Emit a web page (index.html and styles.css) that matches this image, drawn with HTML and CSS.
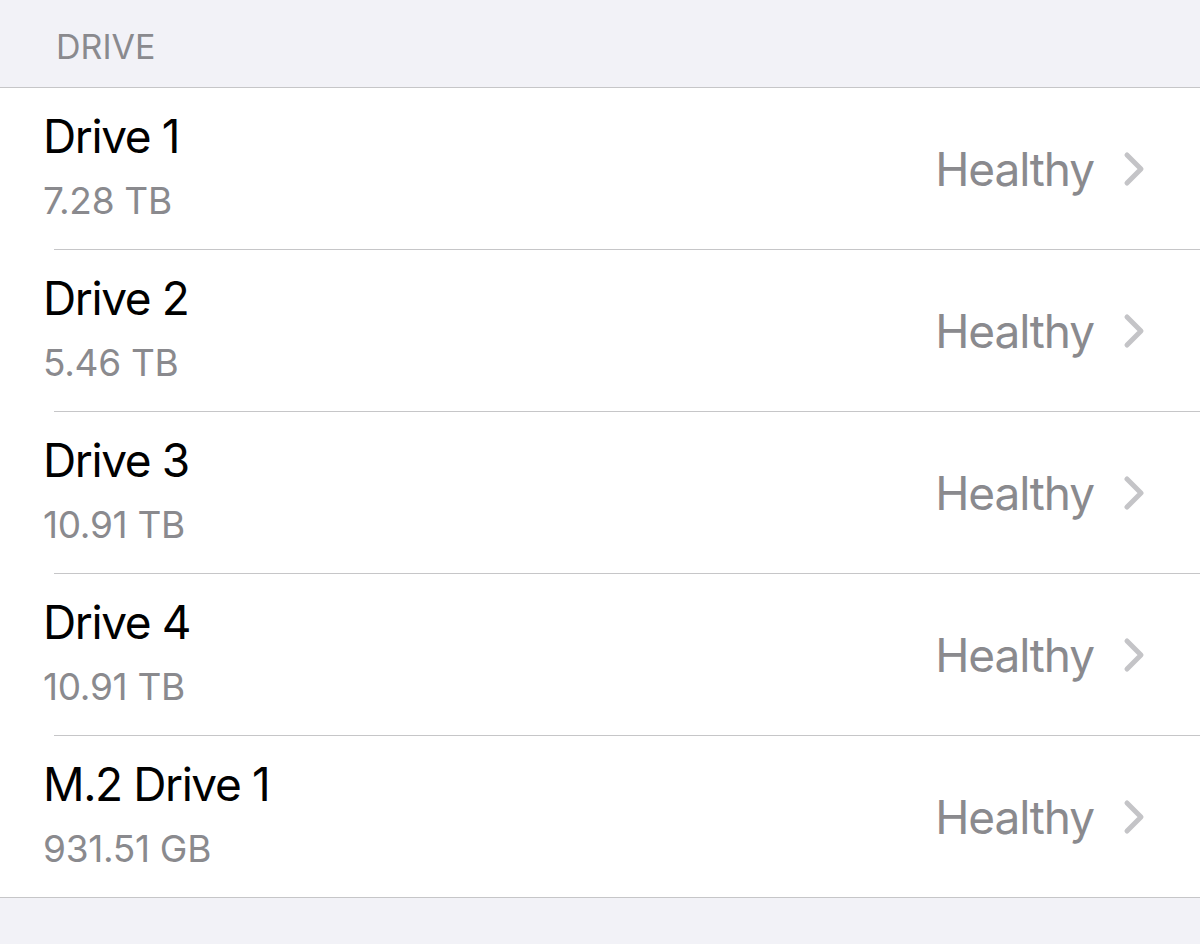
FILE: index.html
```html
<!DOCTYPE html>
<html lang="en">

<head>
    <meta charset="UTF-8">
    <meta name="viewport" content="width=device-width, initial-scale=1.0">
    <title>Drive</title>
    <link rel="stylesheet" href="styles.css">
</head>

<body>
    <div class="section-header">DRIVE</div>

    <div class="list">
        <div class="row">
            <div class="row-text">
                <div class="title">Drive 1</div>
                <div class="subtitle">7.28 TB</div>
            </div>
            <div class="status">Healthy</div>
            <svg class="chevron" width="22" height="36" viewBox="0 0 22 36"><polyline points="4,4 18,18 4,32" /></svg>
        </div>
        <div class="separator"></div>
        <div class="row">
            <div class="row-text">
                <div class="title">Drive 2</div>
                <div class="subtitle">5.46 TB</div>
            </div>
            <div class="status">Healthy</div>
            <svg class="chevron" width="22" height="36" viewBox="0 0 22 36"><polyline points="4,4 18,18 4,32" /></svg>
        </div>
        <div class="separator"></div>
        <div class="row">
            <div class="row-text">
                <div class="title">Drive 3</div>
                <div class="subtitle">10.91 TB</div>
            </div>
            <div class="status">Healthy</div>
            <svg class="chevron" width="22" height="36" viewBox="0 0 22 36"><polyline points="4,4 18,18 4,32" /></svg>
        </div>
        <div class="separator"></div>
        <div class="row">
            <div class="row-text">
                <div class="title">Drive 4</div>
                <div class="subtitle">10.91 TB</div>
            </div>
            <div class="status">Healthy</div>
            <svg class="chevron" width="22" height="36" viewBox="0 0 22 36"><polyline points="4,4 18,18 4,32" /></svg>
        </div>
        <div class="separator"></div>
        <div class="row">
            <div class="row-text">
                <div class="title">M.2 Drive 1</div>
                <div class="subtitle">931.51 GB</div>
            </div>
            <div class="status">Healthy</div>
            <svg class="chevron" width="22" height="36" viewBox="0 0 22 36"><polyline points="4,4 18,18 4,32" /></svg>
        </div>
    </div>
</body>

</html>
```

FILE: styles.css
```css
body {
    font-family: 'Inter', 'Liberation Sans', sans-serif;
    background-color: #f2f2f7;
    margin: 0;
    padding: 0;
}

.section-header {
    height: 87px;
    box-sizing: border-box;
    padding: 29px 0 0 56px;
    font-size: 34px;
    line-height: 36px;
    color: #8a8a8e;
}

.list {
    background-color: #fff;
    border-top: 1px solid #c6c6c8;
    border-bottom: 1px solid #c6c6c8;
}

.row {
    display: flex;
    align-items: center;
    height: 161px;
    padding: 0 55px 0 43px;
}

.row-text {
    flex: 1;
    padding-bottom: 7px;
}

.title {
    font-size: 46px;
    line-height: 56px;
    letter-spacing: -1.4px;
    color: #000;
}

.subtitle {
    font-size: 37px;
    line-height: 44px;
    letter-spacing: -0.3px;
    margin-top: 15px;
    color: #8a8a8e;
}

.status {
    font-size: 46px;
    letter-spacing: -1.1px;
    color: #8a8a8e;
    margin-right: 29px;
}

.chevron polyline {
    fill: none;
    stroke: #c4c4c7;
    stroke-width: 5;
    stroke-linecap: round;
    stroke-linejoin: round;
}

.separator {
    height: 1px;
    margin-left: 54px;
    background-color: #c6c6c8;
}
```
